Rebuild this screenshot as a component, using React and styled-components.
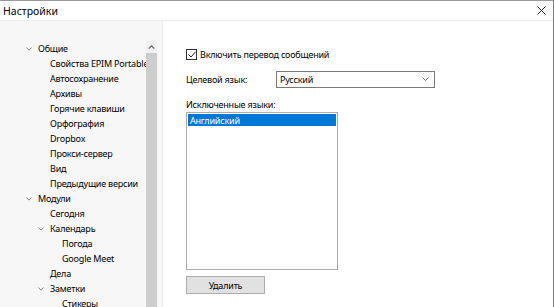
import React from "react";
import styled, { createGlobalStyle } from "styled-components";

const GlobalStyle = createGlobalStyle`
  html, body {
    margin: 0;
    padding: 0;
    background: #fff;
  }
  body {
    font-family: "Noto Sans", "Open Sans", sans-serif;
    font-size: 9px;
    letter-spacing: -0.2px;
    color: #000;
  }
`;

const treeItems = [
  { label: "Общие", level: 0, open: true },
  { label: "Свойства EPIM Portable", level: 1 },
  { label: "Автосохранение", level: 1 },
  { label: "Архивы", level: 1 },
  { label: "Горячие клавиши", level: 1 },
  { label: "Орфография", level: 1 },
  { label: "Dropbox", level: 1 },
  { label: "Прокси-сервер", level: 1 },
  { label: "Вид", level: 1 },
  { label: "Предыдущие версии", level: 1 },
  { label: "Модули", level: 0, open: true },
  { label: "Сегодня", level: 1 },
  { label: "Календарь", level: 1, open: true },
  { label: "Погода", level: 2 },
  { label: "Google Meet", level: 2 },
  { label: "Дела", level: 1 },
  { label: "Заметки", level: 1, open: true },
  { label: "Стикеры", level: 2 },
];

const Window = styled.div`
  width: 554px;
  height: 307px;
  box-sizing: border-box;
  display: flex;
  flex-direction: column;
  overflow: hidden;
  border-top: 1px solid #9a9a9a;
  border-right: 1px solid #7a7a7a;
  background: #fff;
`;

const TitleBar = styled.div`
  height: 19px;
  flex: none;
  display: flex;
  align-items: center;
  justify-content: space-between;
  padding-left: 3px;
  border-bottom: 1px solid #ececec;
  font-size: 10.5px;
  letter-spacing: 0;
`;

const CloseButton = styled.div`
  width: 24px;
  height: 19px;
  display: flex;
  align-items: center;
  justify-content: center;
`;

const Body = styled.div`
  flex: 1;
  display: flex;
  min-height: 0;
`;

const Sidebar = styled.div`
  width: 163px;
  flex: none;
  display: flex;
  background: #f7f7f7;
  border-right: 1px solid #ececec;
  padding-top: 20px;
  box-sizing: border-box;
`;

const Tree = styled.div`
  width: 146px;
  flex: none;
  overflow: hidden;
  white-space: nowrap;
`;

const TreeRow = styled.div`
  height: 15px;
  display: flex;
  align-items: center;
  padding-left: ${(p) => 26 + p.$level * 12}px;
`;

const Chevron = styled.span`
  width: 12px;
  flex: none;
  display: flex;
  align-items: center;
  svg {
    display: block;
  }
`;

const Scrollbar = styled.div`
  width: 11px;
  flex: none;
  display: flex;
  flex-direction: column;
  background: #f0f0f0;
`;

const ScrollArrow = styled.div`
  height: 12px;
  display: flex;
  align-items: center;
  justify-content: center;
`;

const ScrollThumb = styled.div`
  flex: 1;
  background: #cdcdcd;
`;

const Content = styled.div`
  flex: 1;
  padding: 26px 0 0 23px;
  display: flex;
  flex-direction: column;
  align-items: flex-start;
`;

const CheckRow = styled.label`
  height: 14px;
  display: flex;
  align-items: center;
  gap: 3px;
`;

const CheckBox = styled.span`
  width: 9px;
  height: 9px;
  border: 1px solid #333;
  background: #fff;
  display: flex;
  align-items: center;
  justify-content: center;
`;

const FieldRow = styled.div`
  margin-top: 10px;
  display: flex;
  align-items: center;
`;

const FieldLabel = styled.span`
  width: 90px;
`;

const Select = styled.div`
  width: 159px;
  height: 17px;
  box-sizing: border-box;
  border: 1px solid #7a7a7a;
  display: flex;
  align-items: center;
  justify-content: space-between;
  padding: 0 5px 0 3px;
`;

const SectionLabel = styled.div`
  margin-top: 9px;
  height: 14px;
  display: flex;
  align-items: center;
`;

const ListBox = styled.div`
  margin-top: 1px;
  width: 152px;
  height: 158px;
  box-sizing: border-box;
  border: 1px solid #acacac;
  padding: 1px;
`;

const ListItem = styled.div`
  height: 12px;
  display: flex;
  align-items: center;
  padding-left: 2px;
  background: ${(p) => (p.$selected ? "#0078d7" : "transparent")};
  color: ${(p) => (p.$selected ? "#fff" : "#000")};
`;

const Button = styled.div`
  margin-top: 6px;
  width: 79px;
  height: 18px;
  box-sizing: border-box;
  border: 1px solid #adadad;
  background: #e1e1e1;
  display: flex;
  align-items: center;
  justify-content: center;
`;

const ChevronDown = ({ size = 7, color = "#444" }) => (
  <svg width={size} height={size / 2 + 1} viewBox="0 0 8 5">
    <path d="M0.5 0.5 L4 4 L7.5 0.5" fill="none" stroke={color} strokeWidth="1" />
  </svg>
);

export default function App() {
  return (
    <>
      <GlobalStyle />
      <Window>
        <TitleBar>
          <span>Настройки</span>
          <CloseButton>
            <svg width="9" height="9" viewBox="0 0 9 9">
              <path d="M0.5 0.5 L8.5 8.5 M8.5 0.5 L0.5 8.5" stroke="#222" strokeWidth="1" />
            </svg>
          </CloseButton>
        </TitleBar>
        <Body>
          <Sidebar>
            <Tree>
              {treeItems.map((item, i) => (
                <TreeRow key={i} $level={item.level}>
                  <Chevron>{item.open && <ChevronDown size={6} color="#555" />}</Chevron>
                  <span>{item.label}</span>
                </TreeRow>
              ))}
            </Tree>
            <Scrollbar>
              <ScrollArrow>
                <svg width="7" height="4" viewBox="0 0 8 5">
                  <path d="M0.5 4.5 L4 1 L7.5 4.5" fill="none" stroke="#606060" strokeWidth="1.4" />
                </svg>
              </ScrollArrow>
              <ScrollThumb />
            </Scrollbar>
          </Sidebar>
          <Content>
            <CheckRow>
              <CheckBox>
                <svg width="8" height="7" viewBox="0 0 8 7">
                  <path d="M0.5 3.5 L3 6 L7.5 0.8" fill="none" stroke="#222" strokeWidth="1" />
                </svg>
              </CheckBox>
              <span>Включить перевод сообщений</span>
            </CheckRow>
            <FieldRow>
              <FieldLabel>Целевой язык:</FieldLabel>
              <Select>
                <span>Русский</span>
                <ChevronDown size={7} color="#555" />
              </Select>
            </FieldRow>
            <SectionLabel>Исключенные языки:</SectionLabel>
            <ListBox>
              <ListItem $selected>Английский</ListItem>
            </ListBox>
            <Button>Удалить</Button>
          </Content>
        </Body>
      </Window>
    </>
  );
}
